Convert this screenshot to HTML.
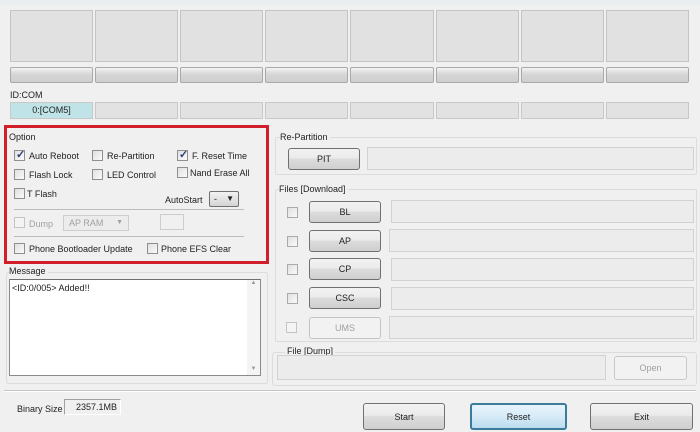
<!DOCTYPE html>
<html><head><meta charset="utf-8"><style>
*{box-sizing:border-box;margin:0;padding:0}
body{width:700px;height:432px;background:#f0f0f0;font-family:"Liberation Sans",sans-serif;font-size:9px;color:#222;position:relative;overflow:hidden}
.a{position:absolute}
.big{background:#e1e1e1;border:1px solid #c4c4c4}
.bar{background:linear-gradient(#f4f4f4,#d6d6d6 45%,#cfcfcf);border:1px solid #a9a9a9;border-radius:2px}
.com{background:#e2e2e2;border:1px solid #c8c8c8}
.cb{width:11px;height:11px;border:1px solid #8e8f8f;background:linear-gradient(135deg,#e0e0e0,#fafafa)}
.chk::after{content:"✓";position:absolute;left:1px;top:-3px;font-size:11px;color:#2a3e7a;font-weight:bold}
.lbl{white-space:nowrap}
.btn{background:linear-gradient(#f2f2f2,#ebebeb 45%,#dcdcdc 50%,#cfcfcf);border:1px solid #707070;border-radius:3px;display:flex;align-items:center;justify-content:center;font-size:9px}
.fld{background:#ececec;border:1px solid #d2d2d2}
.grp{border:1px solid #dcdcdc;border-radius:2px}
</style></head><body>
<div class="a" style="left:0;top:0;width:700px;height:5px;background:#e9eef0"></div>
<div class="a big" style="left:10px;top:10px;width:83px;height:52px"></div>
<div class="a big" style="left:95px;top:10px;width:83px;height:52px"></div>
<div class="a big" style="left:180px;top:10px;width:83px;height:52px"></div>
<div class="a big" style="left:265px;top:10px;width:83px;height:52px"></div>
<div class="a big" style="left:350px;top:10px;width:84px;height:52px"></div>
<div class="a big" style="left:436px;top:10px;width:83px;height:52px"></div>
<div class="a big" style="left:521px;top:10px;width:83px;height:52px"></div>
<div class="a big" style="left:606px;top:10px;width:83px;height:52px"></div>
<div class="a bar" style="left:10px;top:67px;width:83px;height:16px"></div>
<div class="a bar" style="left:95px;top:67px;width:83px;height:16px"></div>
<div class="a bar" style="left:180px;top:67px;width:83px;height:16px"></div>
<div class="a bar" style="left:265px;top:67px;width:83px;height:16px"></div>
<div class="a bar" style="left:350px;top:67px;width:84px;height:16px"></div>
<div class="a bar" style="left:436px;top:67px;width:83px;height:16px"></div>
<div class="a bar" style="left:521px;top:67px;width:83px;height:16px"></div>
<div class="a bar" style="left:606px;top:67px;width:83px;height:16px"></div>
<div class="a lbl" style="left:10px;top:90px">ID:COM</div>
<div class="a com" style="left:10px;top:102px;width:83px;height:17px;background:#bfe3e6;text-align:center;line-height:15px">0:[COM5]</div>
<div class="a com" style="left:95px;top:102px;width:83px;height:17px"></div>
<div class="a com" style="left:180px;top:102px;width:83px;height:17px"></div>
<div class="a com" style="left:265px;top:102px;width:83px;height:17px"></div>
<div class="a com" style="left:350px;top:102px;width:84px;height:17px"></div>
<div class="a com" style="left:436px;top:102px;width:83px;height:17px"></div>
<div class="a com" style="left:521px;top:102px;width:83px;height:17px"></div>
<div class="a com" style="left:606px;top:102px;width:83px;height:17px"></div>

<div class="a" style="left:4px;top:125px;width:265px;height:139px;border:3px solid #d21e2a"></div>
<div class="a lbl" style="left:9px;top:132px">Option</div>
<div class="a cb chk" style="left:14px;top:150px"></div><div class="a lbl" style="left:29px;top:151px">Auto Reboot</div>
<div class="a cb" style="left:92px;top:150px"></div><div class="a lbl" style="left:107px;top:151px">Re-Partition</div>
<div class="a cb chk" style="left:177px;top:150px"></div><div class="a lbl" style="left:192px;top:151px">F. Reset Time</div>
<div class="a cb" style="left:14px;top:169px"></div><div class="a lbl" style="left:29px;top:170px">Flash Lock</div>
<div class="a cb" style="left:92px;top:169px"></div><div class="a lbl" style="left:107px;top:170px">LED Control</div>
<div class="a cb" style="left:177px;top:167px"></div><div class="a lbl" style="left:190px;top:168px">Nand Erase All</div>
<div class="a cb" style="left:14px;top:188px"></div><div class="a lbl" style="left:27px;top:189px">T Flash</div>
<div class="a lbl" style="left:165px;top:195px">AutoStart</div>
<div class="a" style="left:209px;top:191px;width:30px;height:16px;border:1px solid #707070;border-radius:2px;background:linear-gradient(#f2f2f2,#d4d4d4);padding-left:4px;line-height:14px">-<span style="position:absolute;right:4px;top:0;font-size:8px">▼</span></div>
<div class="a" style="left:14px;top:209px;width:230px;border-top:1px solid #bcbcbc"></div>
<div class="a cb" style="left:14px;top:217px;border-color:#c4c4c4;background:#f4f4f4"></div><div class="a lbl" style="left:29px;top:219px;color:#a0a0a0">Dump</div>
<div class="a" style="left:63px;top:215px;width:66px;height:16px;border:1px solid #cdcdcd;background:#ececec;color:#a0a0a0;padding-left:5px;line-height:14px">AP RAM<span style="position:absolute;right:5px;top:0;font-size:7px">▼</span></div>
<div class="a" style="left:160px;top:214px;width:24px;height:16px;border:1px solid #cdcdcd;background:#f0f0f0"></div>
<div class="a" style="left:14px;top:236px;width:230px;border-top:1px solid #bcbcbc"></div>
<div class="a cb" style="left:14px;top:243px"></div><div class="a lbl" style="left:29px;top:244px">Phone Bootloader Update</div>
<div class="a cb" style="left:147px;top:243px"></div><div class="a lbl" style="left:161px;top:244px">Phone EFS Clear</div>

<div class="a grp" style="left:6px;top:272px;width:262px;height:112px"></div>
<div class="a lbl" style="left:9px;top:266px;background:#f0f0f0;padding-right:2px">Message</div>
<div class="a" style="left:9px;top:279px;width:252px;height:97px;background:#fff;border:1px solid #8a8a8a;border-top-color:#707070"></div>
<div class="a lbl" style="left:12px;top:283px">&lt;ID:0/005&gt; Added!!</div>
<div class="a" style="left:247px;top:280px;width:13px;height:95px;background:#f4f4f4;font-size:6px;color:#999;text-align:center">▲<div style="position:absolute;bottom:3px;width:13px">▼</div></div>

<div class="a grp" style="left:275px;top:137px;width:422px;height:38px"></div>
<div class="a lbl" style="left:280px;top:132px;background:#f0f0f0;padding-right:2px">Re-Partition</div>
<div class="a btn" style="left:288px;top:148px;width:72px;height:22px">PIT</div>
<div class="a fld" style="left:367px;top:147px;width:327px;height:23px"></div>
<div class="a grp" style="left:275px;top:189px;width:422px;height:153px"></div>
<div class="a lbl" style="left:279px;top:184px;background:#f0f0f0;padding-right:2px">Files [Download]</div>
<div class="a cb" style="left:287px;top:207px;border-color:#aaa"></div>
<div class="a btn" style="left:309px;top:201px;width:72px;height:22px">BL</div>
<div class="a fld" style="left:391px;top:200px;width:303px;height:23px"></div>
<div class="a cb" style="left:287px;top:236px;border-color:#aaa"></div>
<div class="a btn" style="left:309px;top:230px;width:72px;height:22px">AP</div>
<div class="a fld" style="left:389px;top:229px;width:305px;height:23px"></div>
<div class="a cb" style="left:287px;top:264px;border-color:#aaa"></div>
<div class="a btn" style="left:309px;top:258px;width:72px;height:22px">CP</div>
<div class="a fld" style="left:391px;top:258px;width:303px;height:23px"></div>
<div class="a cb" style="left:287px;top:293px;border-color:#aaa"></div>
<div class="a btn" style="left:309px;top:287px;width:72px;height:22px">CSC</div>
<div class="a fld" style="left:391px;top:287px;width:303px;height:23px"></div>
<div class="a cb" style="left:286px;top:322px;border-color:#c4c4c4;background:#f4f4f4"></div>
<div class="a btn" style="left:309px;top:317px;width:72px;height:22px;border-color:#c4c4c4;background:#f2f2f2;color:#a0a0a0">UMS</div>
<div class="a fld" style="left:389px;top:316px;width:305px;height:23px"></div>

<div class="a grp" style="left:272px;top:352px;width:425px;height:34px;border-radius:3px"></div>
<div class="a lbl" style="left:285px;top:346px;background:#f0f0f0;padding:0 2px">File [Dump]</div>
<div class="a fld" style="left:277px;top:355px;width:329px;height:25px"></div>
<div class="a btn" style="left:614px;top:356px;width:73px;height:24px;border-color:#c8c8c8;background:#f2f2f2;color:#a0a0a0">Open</div>

<div class="a" style="left:4px;top:390px;width:692px;border-top:1px solid #c4c4c4;border-bottom:1px solid #fff"></div>
<div class="a lbl" style="left:17px;top:404px">Binary Size</div>
<div class="a" style="left:64px;top:399px;width:57px;height:16px;border:1px solid #a0a0a0;border-right-color:#fff;border-bottom-color:#fff;text-align:right;padding-right:3px;line-height:14px">2357.1MB</div>
<div class="a btn" style="left:363px;top:403px;width:82px;height:27px">Start</div>
<div class="a btn" style="left:470px;top:403px;width:97px;height:27px;border:2px solid #3d7b9a;background:linear-gradient(#e8f4fb,#d6ebf7 50%,#bcdcef)">Reset</div>
<div class="a btn" style="left:590px;top:403px;width:103px;height:27px">Exit</div>
</body></html>
